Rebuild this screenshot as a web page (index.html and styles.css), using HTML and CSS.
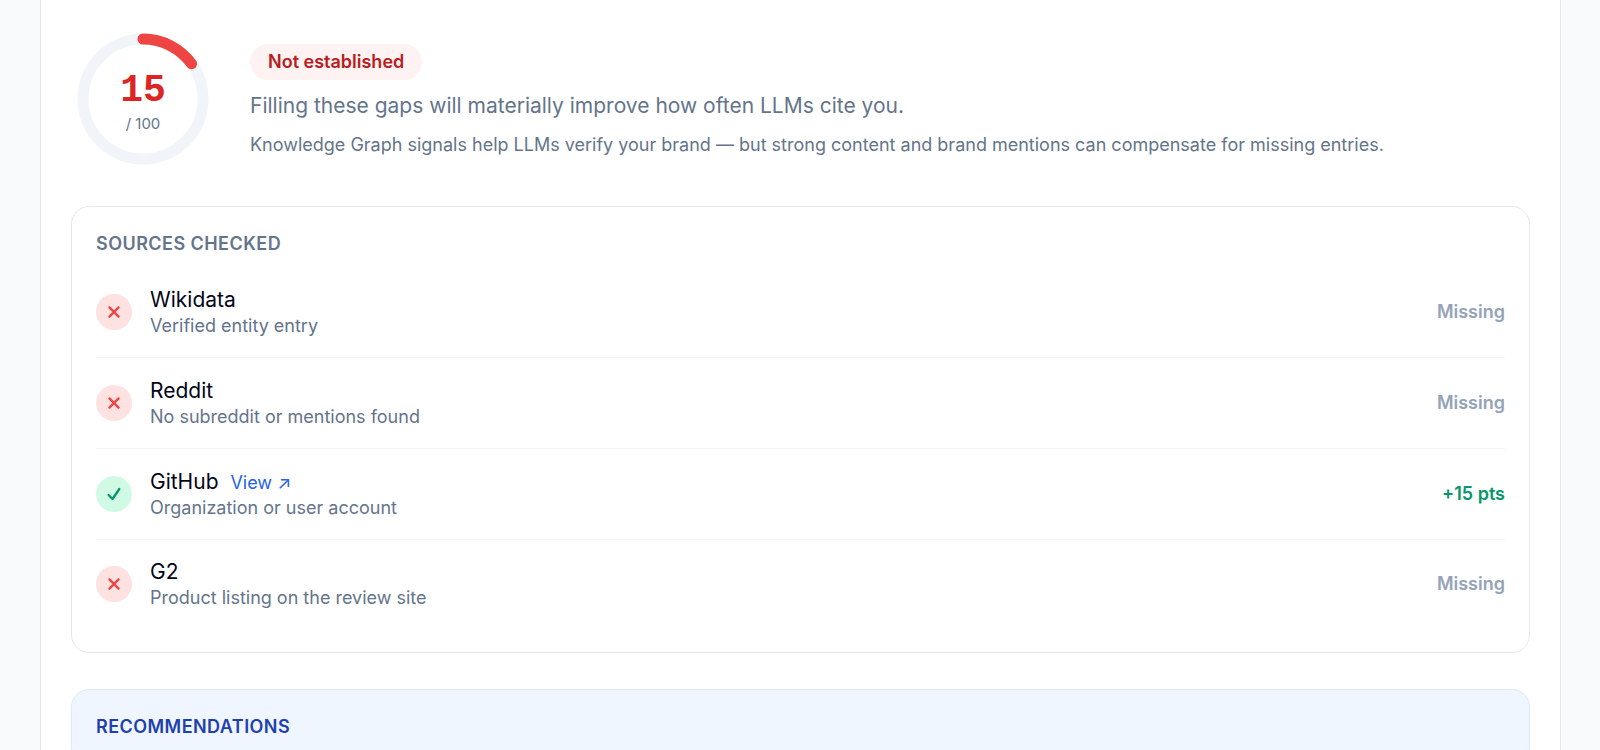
FILE: index.html
```html
<!DOCTYPE html>
<html lang="en">
<head>
	<meta charset="UTF-8">
	<title>Knowledge Graph</title>
	<link rel="stylesheet" href="styles.css">
</head>
<body>
	<main class="card">
		<section class="summary">
			<div class="gauge">
				<svg class="ring" viewBox="0 0 144 144" aria-hidden="true">
					<circle class="track" cx="72" cy="72" r="60"/>
					<circle class="value" cx="72" cy="72" r="60" pathLength="100" stroke-dasharray="15 100" transform="rotate(-90 72 72)"/>
				</svg>
				<div class="score">
					<strong>15</strong>
					<span>/ 100</span>
				</div>
			</div>
			<div class="verdict">
				<span class="pill">Not established</span>
				<p class="lead">Filling these gaps will materially improve how often LLMs cite you.</p>
				<p class="note">Knowledge Graph signals help LLMs verify your brand — but strong content and brand mentions can compensate for missing entries.</p>
			</div>
		</section>

		<section class="panel">
			<h2>Sources checked</h2>
			<ul class="sources">
				<li>
					<svg class="mark no" viewBox="0 0 36 36" aria-hidden="true"><path d="M13.4 13.4l9.2 9.2M22.6 13.4l-9.2 9.2"/></svg>
					<div class="source">
						<div class="name">Wikidata</div>
						<div class="desc">Verified entity entry</div>
					</div>
					<span class="status">Missing</span>
				</li>
				<li>
					<svg class="mark no" viewBox="0 0 36 36" aria-hidden="true"><path d="M13.4 13.4l9.2 9.2M22.6 13.4l-9.2 9.2"/></svg>
					<div class="source">
						<div class="name">Reddit</div>
						<div class="desc">No subreddit or mentions found</div>
					</div>
					<span class="status">Missing</span>
				</li>
				<li>
					<svg class="mark yes" viewBox="0 0 36 36" aria-hidden="true"><path d="M12.6 19l3.9 4L23.3 13"/></svg>
					<div class="source">
						<div class="name">GitHub <a href="#">View ↗</a></div>
						<div class="desc">Organization or user account</div>
					</div>
					<span class="status points">+15 pts</span>
				</li>
				<li>
					<svg class="mark no" viewBox="0 0 36 36" aria-hidden="true"><path d="M13.4 13.4l9.2 9.2M22.6 13.4l-9.2 9.2"/></svg>
					<div class="source">
						<div class="name">G2</div>
						<div class="desc">Product listing on the review site</div>
					</div>
					<span class="status">Missing</span>
				</li>
			</ul>
		</section>

		<section class="panel tips">
			<h2>Recommendations</h2>
		</section>
	</main>
</body>
</html>
```
FILE: styles.css
```css
* {
	box-sizing: border-box;
}
body {
	margin: 0;
	padding: 0 39px 0 40px;
	background: #f8fafc;
	color: #020617;
	font: 18px/26px Inter, "Liberation Sans", sans-serif;
}
h2,p,ul {
	margin: 0;
	padding: 0;
}
.card {
	min-height: 100vh;
	padding: 27px 30px 0;
	background: #fff;
	border: solid #e2e8f0;
	border-width: 0 1px;
}
.summary {
	display: flex;
	align-items: center;
	gap: 35px;
	margin-bottom: 35px;
}
.gauge {
	display: grid;
	flex: none;
	width: 144px;
	height: 144px;
}
.ring,.score {
	grid-area: 1 / 1;
}
.ring circle {
	fill: none;
	stroke-width: 11;
}
.ring .track {
	stroke: #f1f5f9;
}
.ring .value {
	stroke: #ef4444;
	stroke-linecap: round;
}
.score {
	display: flex;
	flex-direction: column;
	align-items: center;
	justify-content: center;
	gap: 5px;
	padding-top: 8px;
}
.score strong {
	color: #dc2626;
	font: bold 38px/36px "Liberation Mono", monospace;
}
.score span {
	color: #64748b;
	font-size: 15px;
	line-height: 20px;
}
.verdict {
	display: flex;
	flex-direction: column;
	align-items: flex-start;
	gap: 11px;
	padding-top: 4px;
}
.pill {
	padding: 5px 18px;
	border-radius: 18px;
	background: #fef2f2;
	color: #b91c1c;
	font-weight: 600;
}
.lead {
	color: #64748b;
	font-size: 21px;
	line-height: 30px;
}
.note {
	color: #64748b;
}
.panel {
	margin-bottom: 36px;
	padding: 24px;
	border: 1px solid #e2e8f0;
	border-radius: 18px;
}
.panel h2 {
	color: #64748b;
	font-size: 18px;
	font-weight: 600;
	letter-spacing: 0.025em;
	text-transform: uppercase;
}
.sources {
	margin-top: 10px;
	list-style: none;
}
.sources li {
	display: flex;
	align-items: center;
	gap: 18px;
	padding: 18px 0;
	border-bottom: 1px solid #f1f5f9;
}
.sources li:last-child {
	padding: 17px 0;
	border-bottom: 0;
}
.mark {
	flex: none;
	width: 36px;
	height: 36px;
	border-radius: 50%;
	fill: none;
	stroke-width: 2.3;
	stroke-linecap: round;
	stroke-linejoin: round;
}
.no {
	background: #fee2e2;
	stroke: #ef4444;
}
.yes {
	background: #d1fae5;
	stroke: #059669;
}
.source {
	flex: 1;
	padding-top: 2px;
}
.name {
	font-size: 21px;
}
.name a {
	margin-left: 6px;
	color: #2563eb;
	font-size: 18px;
	line-height: 18px;
	text-decoration: none;
}
.desc {
	color: #64748b;
}
.status {
	color: #94a3b8;
	font-weight: 600;
}
.points {
	color: #059669;
}
.tips {
	margin-bottom: 0;
	border-color: #dbeafe;
	background: #eff6ff;
}
.tips h2 {
	color: #1e40af;
}
```
